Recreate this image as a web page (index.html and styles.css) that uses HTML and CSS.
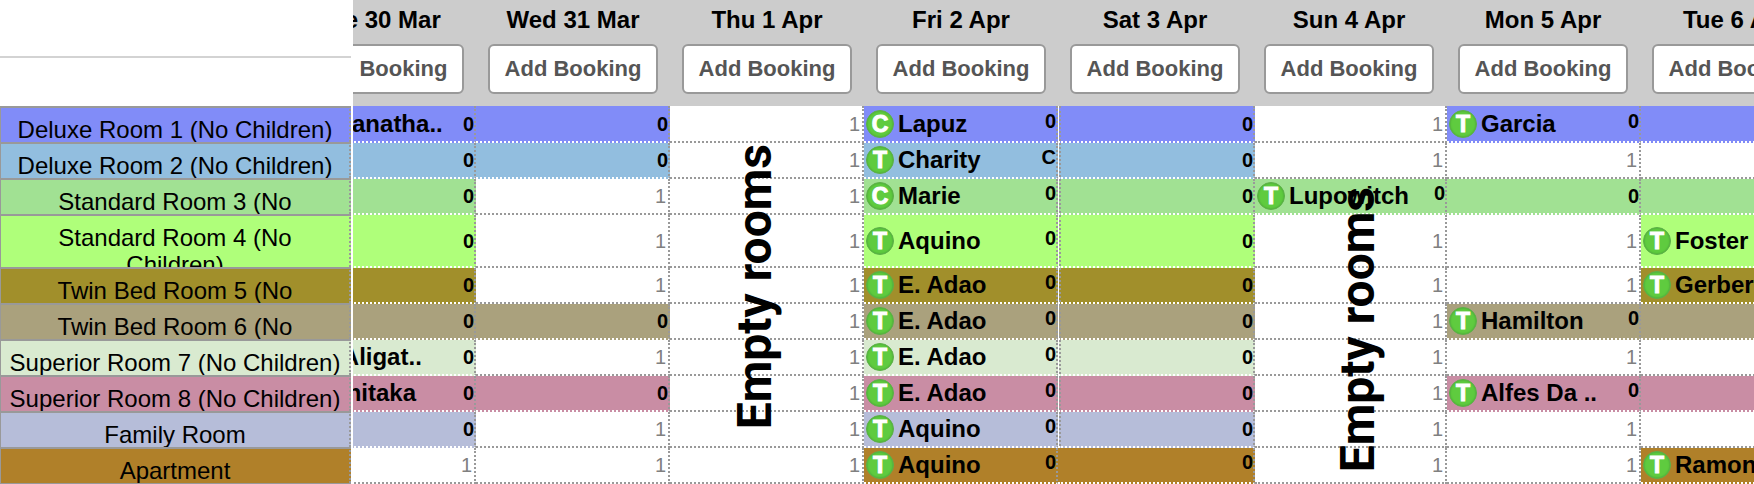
FILE: index.html
```html
<!DOCTYPE html>
<html lang="en">
<head>
    <meta charset="UTF-8">
    <meta name="viewport" content="width=device-width, initial-scale=1.0">
    <title>Booking Calendar</title>
    <link rel="stylesheet" href="styles.css">
</head>
<body>
    <div class="calendar">
        <aside class="rooms">
            <div class="rooms-top"></div>
            <div class="rooms-filter"></div>
            <ul class="room-list">
                <li class="room deluxe-1">Deluxe Room 1 (No Children)</li>
                <li class="room deluxe-2">Deluxe Room 2 (No Children)</li>
                <li class="room standard-3">Standard Room 3 (No Children)</li>
                <li class="room standard-4 tall">Standard Room 4 (No Children)</li>
                <li class="room twin-5">Twin Bed Room 5 (No Children)</li>
                <li class="room twin-6">Twin Bed Room 6 (No Children)</li>
                <li class="room superior-7">Superior Room 7 (No Children)</li>
                <li class="room superior-8">Superior Room 8 (No Children)</li>
                <li class="room family">Family Room</li>
                <li class="room apartment">Apartment</li>
            </ul>
        </aside>

        <main class="schedule">
            <div class="days">
                <div class="day"><span>Tue 30 Mar</span><button type="button" class="add-button">Add Booking</button></div>
                <div class="day"><span>Wed 31 Mar</span><button type="button" class="add-button">Add Booking</button></div>
                <div class="day"><span>Thu 1 Apr</span><button type="button" class="add-button">Add Booking</button></div>
                <div class="day"><span>Fri 2 Apr</span><button type="button" class="add-button">Add Booking</button></div>
                <div class="day"><span>Sat 3 Apr</span><button type="button" class="add-button">Add Booking</button></div>
                <div class="day"><span>Sun 4 Apr</span><button type="button" class="add-button">Add Booking</button></div>
                <div class="day"><span>Mon 5 Apr</span><button type="button" class="add-button">Add Booking</button></div>
                <div class="day"><span>Tue 6 Apr</span><button type="button" class="add-button">Add Booking</button></div>
            </div>

            <table class="grid">
                <colgroup>
                    <col class="col"><col class="col"><col class="col"><col class="col">
                    <col class="col-wide"><col class="col-narrow"><col class="col"><col class="col">
                </colgroup>
                <tbody>
                    <tr class="first deluxe-1">
                        <td class="taken"><div class="booking"><span class="status">T</span>Sivanatha..</div>0</td>
                        <td class="taken">0</td>
                        <td>1<div class="empty-note">Empty rooms</div></td>
                        <td class="taken start"><div class="booking"><span class="status">C</span>Lapuz</div>0</td>
                        <td class="taken stay">0</td>
                        <td>1</td>
                        <td class="taken start"><div class="booking"><span class="status">T</span>Garcia</div>0</td>
                        <td class="taken">0</td>
                    </tr>
                    <tr class="deluxe-2">
                        <td class="taken">0</td>
                        <td class="taken">0</td>
                        <td>1</td>
                        <td class="taken start"><div class="booking"><span class="status">T</span>Charity</div>C</td>
                        <td class="taken stay">0</td>
                        <td>1<div class="empty-note low">Empty rooms</div></td>
                        <td>1</td>
                        <td>1</td>
                    </tr>
                    <tr class="standard-3">
                        <td class="taken">0</td>
                        <td>1</td>
                        <td>1</td>
                        <td class="taken start"><div class="booking"><span class="status">C</span>Marie</div>0</td>
                        <td class="taken stay">0</td>
                        <td class="taken start"><div class="booking"><span class="status">T</span>Lupowitch</div>0</td>
                        <td class="taken">0</td>
                        <td class="taken">0</td>
                    </tr>
                    <tr class="standard-4 tall">
                        <td class="taken">0</td>
                        <td>1</td>
                        <td>1</td>
                        <td class="taken start"><div class="booking"><span class="status">T</span>Aquino</div>0</td>
                        <td class="taken stay">0</td>
                        <td>1</td>
                        <td>1</td>
                        <td class="taken start"><div class="booking"><span class="status">T</span>Foster</div>0</td>
                    </tr>
                    <tr class="twin-5">
                        <td class="taken">0</td>
                        <td>1</td>
                        <td>1</td>
                        <td class="taken start"><div class="booking"><span class="status">T</span>E. Adao</div>0</td>
                        <td class="taken stay">0</td>
                        <td>1</td>
                        <td>1</td>
                        <td class="taken start"><div class="booking"><span class="status">T</span>Gerber</div>0</td>
                    </tr>
                    <tr class="twin-6">
                        <td class="taken">0</td>
                        <td class="taken">0</td>
                        <td>1</td>
                        <td class="taken start"><div class="booking"><span class="status">T</span>E. Adao</div>0</td>
                        <td class="taken stay">0</td>
                        <td>1</td>
                        <td class="taken start"><div class="booking"><span class="status">T</span>Hamilton</div>0</td>
                        <td class="taken">0</td>
                    </tr>
                    <tr class="superior-7">
                        <td class="taken"><div class="booking"><span class="status">T</span>J. Aligat..</div>0</td>
                        <td>1</td>
                        <td>1</td>
                        <td class="taken start"><div class="booking"><span class="status">T</span>E. Adao</div>0</td>
                        <td class="taken stay">0</td>
                        <td>1</td>
                        <td>1</td>
                        <td>1</td>
                    </tr>
                    <tr class="superior-8">
                        <td class="taken"><div class="booking"><span class="status">T</span>Ashitaka</div>0</td>
                        <td class="taken">0</td>
                        <td>1</td>
                        <td class="taken start"><div class="booking"><span class="status">T</span>E. Adao</div>0</td>
                        <td class="taken stay">0</td>
                        <td>1</td>
                        <td class="taken start"><div class="booking"><span class="status">T</span>Alfes Da ..</div>0</td>
                        <td class="taken">0</td>
                    </tr>
                    <tr class="family">
                        <td class="taken">0</td>
                        <td>1</td>
                        <td>1</td>
                        <td class="taken start"><div class="booking"><span class="status">T</span>Aquino</div>0</td>
                        <td class="taken stay">0</td>
                        <td>1</td>
                        <td>1</td>
                        <td>1</td>
                    </tr>
                    <tr class="apartment">
                        <td>1</td>
                        <td>1</td>
                        <td>1</td>
                        <td class="taken start"><div class="booking"><span class="status">T</span>Aquino</div>0</td>
                        <td class="taken start">0</td>
                        <td>1</td>
                        <td>1</td>
                        <td class="taken start"><div class="booking"><span class="status">T</span>Ramon</div>0</td>
                    </tr>
                </tbody>
            </table>
        </main>
    </div>
</body>
</html>
```
FILE: styles.css
```css
* {
    margin: 0;
    padding: 0;
    box-sizing: border-box;
}

body {
    font-family: "Liberation Sans", Arial, Helvetica, sans-serif;
    font-size: 24px;
    color: #000;
    background: #fff;
    overflow: hidden;
}

.calendar {
    display: flex;
    gap: 2px;
}

/* Room colours */
.deluxe-1 { --room: #818cf8; }
.deluxe-2 { --room: #92bedf; }
.standard-3 { --room: #a1e193; }
.standard-4 { --room: #afff7a; }
.twin-5 { --room: #a18f2b; }
.twin-6 { --room: #aaa17d; }
.superior-7 { --room: #d9ead0; }
.superior-8 { --room: #c98da4; }
.family { --room: #b6bdd9; }
.apartment { --room: #b08029; }

/* Room names */
.rooms {
    flex: 0 0 351px;
}

.rooms-top {
    height: 58px;
    border-bottom: 2px solid #d3d3d3;
}

.rooms-filter {
    height: 48px;
}

.room-list {
    list-style: none;
    border-bottom: 2px solid #999;
}

.room {
    height: 36px;
    padding: 8px 8px 0;
    line-height: 27px;
    text-align: center;
    overflow: hidden;
    background: var(--room);
    border-top: 2px solid #999;
    border-left: 1px solid #999;
    border-right: 2px dotted #999;
}

.room.tall {
    height: 53px;
}

/* Schedule, scrolled part of a day to the right */
.schedule {
    flex: 1;
    min-width: 0;
    overflow: hidden;
}

.days {
    display: flex;
    height: 106px;
    background: #ccc;
}

.day {
    flex: 0 0 194px;
    display: flex;
    flex-direction: column;
    align-items: center;
    gap: 11px;
    padding-top: 6px;
    font-weight: bold;
    line-height: 27px;
}

.day:first-child,
.grid {
    margin-left: -71px;
}

.add-button {
    width: 170px;
    height: 50px;
    font-family: inherit;
    font-size: 22px;
    font-weight: bold;
    color: #555;
    background: #fff;
    border: 2px solid #999;
    border-radius: 6px;
    cursor: pointer;
}

.grid {
    width: 1553px;
    table-layout: fixed;
    border-collapse: separate;
    border-spacing: 0;
}

.col {
    width: 194px;
}

.col-wide {
    width: 197px;
}

.col-narrow {
    width: 192px;
}

.grid tr {
    height: 36px;
}

.grid tr.first {
    height: 37px;
}

.grid tr.tall {
    height: 53px;
}

.grid td {
    position: relative;
    padding-right: 2px;
    font-size: 20px;
    line-height: 22px;
    color: #808080;
    text-align: right;
    vertical-align: middle;
    border-right: 2px dotted #999;
    border-bottom: 2px dotted #999;
}

.grid td.taken {
    padding-right: 0;
    font-weight: bold;
    color: #000;
    background: var(--room);
    border-bottom-color: #fff;
}

.grid td.start {
    padding: 0 0 6px;
}

.grid td.stay {
    border-left: 1px solid #fff;
}

.grid td.stay::before {
    content: '';
    position: absolute;
    top: 0;
    bottom: 0;
    left: 0;
    border-left: 2px dotted #999;
}

.booking {
    position: absolute;
    top: 0;
    bottom: 0;
    left: 2px;
    display: flex;
    align-items: center;
    gap: 4px;
    font-size: 24px;
    white-space: nowrap;
}

.status {
    width: 28px;
    height: 28px;
    font-size: 23px;
    line-height: 27px;
    text-align: center;
    color: #fff;
    -webkit-text-stroke: 1px #fff;
    background: #5fcb3f;
    border: 1px solid #5caf48;
    border-radius: 50%;
    box-shadow: inset 0 0 2px #3f9a30;
}

/* Vertical label across the days with free rooms */
.empty-note {
    position: absolute;
    top: 38px;
    right: 77px;
    z-index: 1;
    font-family: Roboto, "Liberation Sans", sans-serif;
    font-size: 48px;
    font-weight: bold;
    line-height: 60px;
    color: #000;
    white-space: nowrap;
    writing-mode: vertical-rl;
    transform: rotate(180deg);
}

.empty-note.low {
    top: 44px;
    right: 57px;
}
```
